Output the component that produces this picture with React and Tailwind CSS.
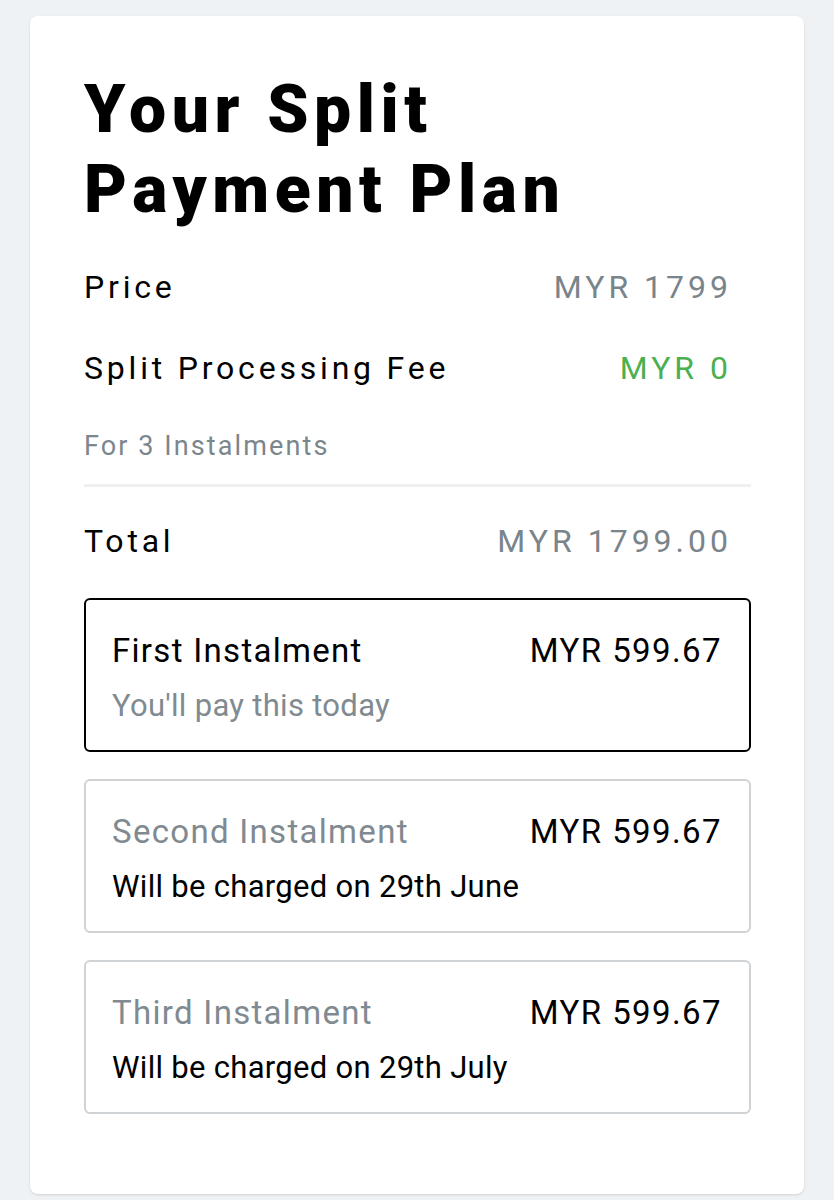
import React from 'react';

const instalments = [
  { title: 'First Instalment', amount: 'MYR 599.67', note: "You'll pay this today", active: true },
  { title: 'Second Instalment', amount: 'MYR 599.67', note: 'Will be charged on 29th June', active: false },
  { title: 'Third Instalment', amount: 'MYR 599.67', note: 'Will be charged on 29th July', active: false },
];

const SummaryRow = ({ label, value, valueClass, height = 'h-[81px]' }) => (
  <div className={`flex ${height} items-center justify-between pr-[19px]`}>
    <span className="text-[32px] font-normal tracking-[3.8px] text-black">{label}</span>
    <span className={`text-[32px] font-normal tracking-[4px] ${valueClass}`}>{value}</span>
  </div>
);

const App = () => {
  return (
    <div className="min-h-[1200px] bg-[#eef2f5] px-[30px] pt-4 font-['Roboto','Liberation_Sans',sans-serif]">
      <div className="rounded-lg bg-white pl-[54px] pr-[53px] pt-[54px] pb-[80px] shadow-sm">
        <h1 className="text-[66px] font-black leading-[80px] tracking-[5.6px] text-black">
          Your Split
          <br />
          Payment Plan
        </h1>

        <div className="mt-4">
          <SummaryRow label="Price" value="MYR 1799" valueClass="text-[#79848b]" />
          <SummaryRow label="Split Processing Fee" value="MYR 0" valueClass="text-[#4caf50]" />
          <div className="flex h-[76px] items-center">
            <span className="text-[27px] tracking-[2.1px] text-[#7b868d]">For 3 Instalments</span>
          </div>
          <div className="h-[3px] bg-[#eef0f2]" />
          <SummaryRow label="Total" value="MYR 1799.00" valueClass="text-[#79848b]" height="h-[108px]" />
        </div>

        <div className="mt-[3px] flex flex-col gap-[27px]">
          {instalments.map((item) => (
            <div
              key={item.title}
              className={
                item.active
                  ? 'h-[154px] rounded-md border-2 border-black pl-[26px] pr-[28px] pt-[32px]'
                  : 'h-[154px] rounded-md border-2 border-[#cfd3d6] pl-[26px] pr-[28px] pt-[32px]'
              }
            >
              <div className="flex h-[38px] items-center justify-between">
                <span
                  className={
                    item.active
                      ? 'text-[33px] tracking-[1.3px] text-black'
                      : 'text-[33px] tracking-[1.3px] text-[#808a90]'
                  }
                >
                  {item.title}
                </span>
                <span className="-mr-[1px] text-[33px] tracking-[1.4px] text-black">{item.amount}</span>
              </div>
              <div className="mt-[18px] flex h-[36px] items-center">
                <span
                  className={
                    item.active
                      ? 'text-[31px] tracking-[0.3px] text-[#808a90]'
                      : 'text-[31px] tracking-[0.3px] text-black'
                  }
                >
                  {item.note}
                </span>
              </div>
            </div>
          ))}
        </div>
      </div>
    </div>
  );
};

export default App;
